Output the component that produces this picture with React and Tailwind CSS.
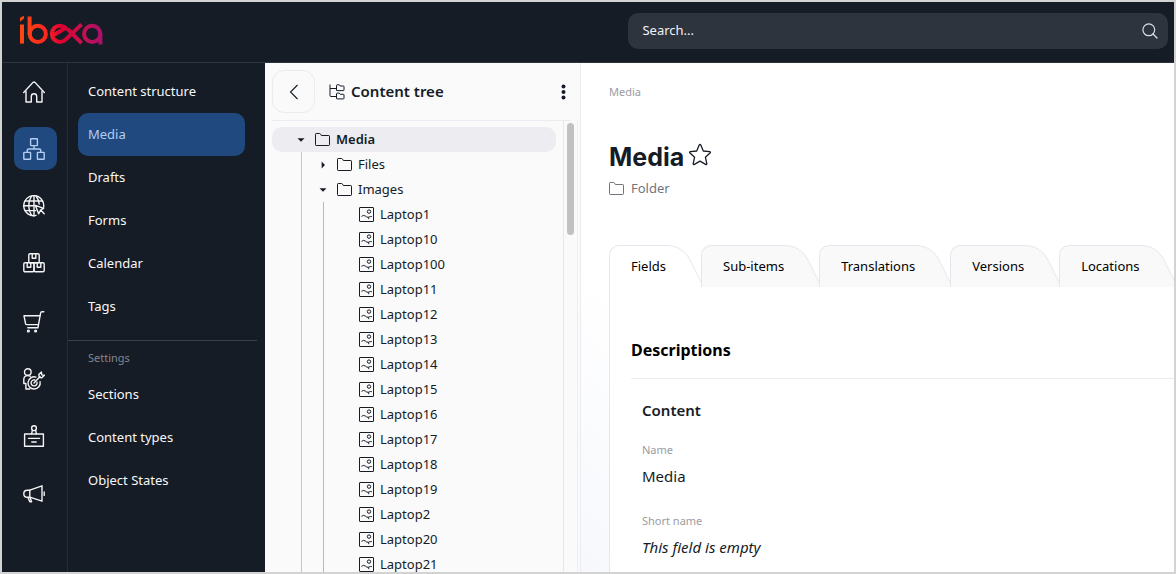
import React, { useState } from 'react';

const iconPaths = {
  home: (
    <>
      <path d="M0.7 11.5 L10 1.4 Q11 0.4 12 1.4 L21.3 11.5" />
      <path d="M3 10.5 V21 H8.3 V15.5 Q8.3 12.8 11 12.8 Q13.7 12.8 13.7 15.5 V21 H19 V10.5" />
    </>
  ),
  content: (
    <>
      <rect x="7.6" y="0.8" width="6.8" height="6.8" rx="0.5" />
      <rect x="0.8" y="14.4" width="6.8" height="6.8" rx="0.5" />
      <rect x="14.4" y="14.4" width="6.8" height="6.8" rx="0.5" />
      <path d="M11 7.6 V11 M4.2 14.4 V12.5 Q4.2 11 5.7 11 H16.3 Q17.8 11 17.8 12.5 V14.4" />
    </>
  ),
  site: (
    <>
      <path d="M20.6 12.2 A10 10 0 1 0 13 20.4" />
      <path d="M8.5 20.2 C4.8 15 4.8 7 8.5 1.2 M13 1 C15 3.6 16 6.4 16.2 9 M11 0.8 V21 M2 6 H19.6 M0.8 10.8 H11.4 M2 15.6 H12.8" />
      <path d="M12.4 10.4 L20.6 13.4 L17.6 15 L21.2 18.8 M17.6 15 L15.6 18.8 L12.4 10.4" />
    </>
  ),
  products: (
    <>
      <rect x="5.8" y="1.8" width="10.4" height="9" rx="1.2" />
      <rect x="0.8" y="10.8" width="10.2" height="9" rx="1.2" />
      <rect x="11" y="10.8" width="10.2" height="9" rx="1.2" />
      <path d="M9.2 1.8 V6.2 H12.8 V1.8 M4.2 10.8 V15.2 H7.8 V10.8 M14.2 10.8 V15.2 H17.8 V10.8" />
    </>
  ),
  cart: (
    <>
      <path d="M20.8 0.8 H19 Q17.8 0.8 17.6 2 L14.9 16.8 H4.8" />
      <path d="M17 4.8 H1 L2.6 12.8 Q2.8 13.6 3.8 13.6 H15.4" />
      <circle cx="5.4" cy="20" r="0.9" />
      <circle cx="12.6" cy="20" r="0.9" />
    </>
  ),
  personalization: (
    <>
      <circle cx="4.8" cy="4" r="3.3" />
      <path d="M6.8 21 H2.9 V15.5 H0.8 V11.5 Q0.8 7.6 4.8 7.6 Q6.2 7.6 7.2 8.3" />
      <path d="M12.9 9.1 A6.1 6.1 0 1 0 17.1 13.8" />
      <path d="M11.8 12 A3 3 0 1 0 14 14.3" />
      <path d="M11 15 L17 8.6 M16.2 9.4 L15.8 6.6 L18.4 4 L18.8 6.9 L21.4 7.3 L18.8 9.8 Z" />
    </>
  ),
  corporate: (
    <>
      <rect x="1.6" y="9" width="18.8" height="12.2" />
      <circle cx="11" cy="3.2" r="2.4" />
      <path d="M8.6 9 L9.4 5.2 M13.4 9 L12.6 5.2 M5.5 13.4 H16.5 M8.8 17 H13.2" />
    </>
  ),
  marketing: (
    <>
      <path d="M6.8 8.2 L19 3.8 V19.2 L6.8 15.2 Z" />
      <path d="M6.8 8.2 H4.2 Q0.8 8.2 0.8 11.7 Q0.8 15.2 4.2 15.2 H6.8 M4.8 15.2 L6.8 19.8 H8.6 L7 15.4 M21.2 10 V13.4" />
    </>
  ),
};

const navGroups = [
  [
    { id: 'home', label: 'Dashboard' },
    { id: 'content', label: 'Content', active: true },
    { id: 'site', label: 'Site' },
    { id: 'products', label: 'Product catalog' },
  ],
  [
    { id: 'cart', label: 'Commerce' },
    { id: 'personalization', label: 'Personalization' },
    { id: 'corporate', label: 'Corporate' },
    { id: 'marketing', label: 'Marketing' },
  ],
];

const menuItems = ['Content structure', 'Media', 'Drafts', 'Forms', 'Calendar', 'Tags'];
const settingsItems = ['Sections', 'Content types', 'Object States'];

const images = [
  'Laptop1', 'Laptop10', 'Laptop100', 'Laptop11', 'Laptop12', 'Laptop13', 'Laptop14', 'Laptop15',
  'Laptop16', 'Laptop17', 'Laptop18', 'Laptop19', 'Laptop2', 'Laptop20', 'Laptop21',
];

const tabs = ['Fields', 'Sub-items', 'Translations', 'Versions', 'Locations'];

const Logo = () => (
  <svg width="84" height="32" viewBox="0 0 84 32" fill="none" strokeWidth="4" aria-label="ibexa" role="img">
    <defs>
      <linearGradient id="brand" gradientUnits="userSpaceOnUse" x1="0" y1="0" x2="84" y2="0">
        <stop offset="0" stopColor="#ff4713" />
        <stop offset="0.3" stopColor="#fa2a1e" />
        <stop offset="0.5" stopColor="#db0032" />
        <stop offset="0.72" stopColor="#c8104a" />
        <stop offset="1" stopColor="#a8106e" />
      </linearGradient>
    </defs>
    <g stroke="url(#brand)">
      <path d="M2 9.5 V28.6" />
      <path d="M0 6.8 V2.8 L4 0.8 V3.4 Z" fill="url(#brand)" stroke="none" />
      <path d="M9.6 1.5 V19.5" />
      <circle cx="17.8" cy="18.9" r="8.1" />
      <path d="M32 21 L45.6 13 A8.1 8.1 0 1 0 45.6 24.6 L61.6 9.4" />
      <path d="M47.6 14 L61.6 28.2" />
      <circle cx="72.2" cy="18.9" r="8.1" />
      <path d="M80.4 18.6 V29.4" />
    </g>
  </svg>
);

const NavIcon = ({ id }) => (
  <svg
    width="22"
    height="22"
    viewBox="0 0 22 22"
    fill="none"
    stroke="currentColor"
    strokeWidth="1.4"
    strokeLinejoin="round"
    strokeLinecap="round"
    aria-hidden="true"
  >
    {iconPaths[id]}
  </svg>
);

const FolderIcon = () => (
  <svg className="shrink-0" width="15" height="15" viewBox="0 0 15 15" fill="none" stroke="currentColor" strokeLinejoin="round" aria-hidden="true">
    <path d="M0.5 12.8 V2.2 Q0.5 1.5 1.2 1.5 H4.6 Q5.2 1.5 5.5 2 L6.3 3.5 H13.8 Q14.5 3.5 14.5 4.2 V12.8 Q14.5 13.5 13.8 13.5 H1.2 Q0.5 13.5 0.5 12.8 Z" />
  </svg>
);

const ImageIcon = () => (
  <svg className="shrink-0" width="15" height="15" viewBox="0 0 15 15" fill="none" stroke="currentColor" aria-hidden="true">
    <rect x="0.5" y="0.5" width="14" height="14" rx="0.4" />
    <circle cx="10" cy="4.6" r="1.7" />
    <path d="M2.5 9.4 Q4.5 7.6 6.3 9 Q7.6 10.6 9.6 10.2 Q11.4 9.2 12.8 9.6 M9.2 10.2 Q9.8 11 9.8 12.2" />
  </svg>
);

const Caret = ({ open = false }) => (
  <button type="button" aria-label={open ? 'Collapse' : 'Expand'} className="flex w-4 shrink-0 justify-center">
    <svg width="8" height="8" viewBox="0 0 8 8" fill="currentColor" aria-hidden="true">
      {open ? <path d="M0.5 2.2 H7.5 L4 5.8 Z" /> : <path d="M2.6 0.6 V7.4 L6 4 Z" />}
    </svg>
  </button>
);

const MenuLink = ({ label, active = false }) => (
  <a
    href="#"
    aria-current={active ? 'page' : undefined}
    className={`flex h-[43px] items-center rounded-[10px] px-2.5 text-[13px] ${
      active ? 'bg-[#20497f] text-[#b3cdf3]' : 'text-[#f8f8fa]'
    }`}
  >
    {label}
  </a>
);

const Field = ({ label, children }) => (
  <div>
    <dt className="text-[11px] leading-4 text-[#9a9ca3]">{label}</dt>
    <dd className="mt-[7px] text-[15px] leading-[22px] text-[#151c26]">{children}</dd>
  </div>
);

const App = () => {
  const [activeTab, setActiveTab] = useState('Fields');

  return (
    <div className="flex h-screen flex-col overflow-hidden border-2 border-[#d3d3d3] bg-white font-['Noto_Sans',sans-serif] text-[#151c26]">
      <header className="flex h-[61px] shrink-0 items-center justify-between border-b border-[#2d343e] bg-[#151c25] pr-[6px] pb-0.5 pl-[18px]">
        <a href="#" className="block">
          <Logo />
        </a>
        <label className="flex h-9 w-[47%] items-center rounded-[10px] bg-[#2e343e] px-3.5">
          <input
            type="search"
            placeholder="Search..."
            aria-label="Search"
            className="min-w-0 flex-1 bg-transparent text-[13px] text-white outline-none placeholder:text-[#f1f1f3]"
          />
          <svg className="-mr-1 shrink-0" width="16" height="16" viewBox="0 0 16 16" fill="none" stroke="#dddee1" strokeWidth="1.2" strokeLinecap="round" aria-hidden="true">
            <circle cx="6.8" cy="6.8" r="5.9" />
            <path d="M11 11 L15 15" />
          </svg>
        </label>
      </header>

      <div className="flex min-h-0 flex-1">
        {/* Main navigation */}
        <nav aria-label="Main" className="flex w-[66px] shrink-0 flex-col gap-4 border-r border-[#262d38] bg-[#151c25] pt-[7px] pl-3">
          {navGroups.map((group, index) => (
            <div key={index} className="flex flex-col gap-3.5">
              {group.map((item) => (
                <a
                  key={item.id}
                  href="#"
                  aria-label={item.label}
                  className={`flex h-[43px] w-[43px] items-center rounded-[10px] pl-[9px] ${
                    item.active ? 'bg-[#20497f] text-[#b3cdf3]' : 'text-[#f4f4f6]'
                  }`}
                >
                  <NavIcon id={item.id} />
                </a>
              ))}
            </div>
          ))}
        </nav>

        {/* Section menu */}
        <nav aria-label="Content" className="w-[197px] shrink-0 bg-[#151c25] pt-[7px]">
          <div className="pr-5 pl-2.5">
            {menuItems.map((label) => (
              <MenuLink key={label} label={label} active={label === 'Media'} />
            ))}
          </div>
          <div className="mt-3 mr-2 border-t border-[#3a404a] pt-2 pr-3 pl-2.5">
            <p className="px-2.5 text-[11px] leading-[18px] text-[#84868e]">Settings</p>
            <div className="mt-1.5">
              {settingsItems.map((label) => (
                <MenuLink key={label} label={label} />
              ))}
            </div>
          </div>
        </nav>

        {/* Content tree */}
        <aside className="flex w-[316px] shrink-0 flex-col border-r border-[#ececf2] bg-[#fafafa] pl-[7px]">
          <div className="mr-[9px] flex h-[58px] shrink-0 items-center border-b border-[#ebebf1]">
            <button type="button" aria-label="Collapse tree" className="flex h-[43px] w-[43px] items-center justify-center rounded-xl border border-[#ebebf1]">
              <svg width="10" height="16" viewBox="0 0 10 16" fill="none" stroke="currentColor" strokeWidth="1.1" aria-hidden="true">
                <path d="M8.5 1 L1.5 8 L8.5 15" />
              </svg>
            </button>
            <svg className="ml-3.5 shrink-0" width="16" height="16" viewBox="0 0 16 16" fill="none" stroke="currentColor" strokeLinejoin="round" aria-hidden="true">
              <path d="M1 0.5 V11.5 Q1 12.5 2 12.5 H7 M1 4.5 H7" />
              <path d="M7.5 6.2 V1.5 Q7.5 0.8 8.2 0.8 H10.3 L11.2 2 H14.4 Q15 2 15 2.6 V6 Q15 6.6 14.4 6.6 H8.1 Q7.5 6.6 7.5 6 Z" />
              <path d="M7.5 14.4 V9.8 Q7.5 9.1 8.2 9.1 H10.3 L11.2 10.3 H14.4 Q15 10.3 15 10.9 V14.3 Q15 14.9 14.4 14.9 H8.1 Q7.5 14.9 7.5 14.3 Z" />
            </svg>
            <h2 className="ml-1.5 flex-1 text-[15px] font-semibold">Content tree</h2>
            <button type="button" aria-label="More options" className="mr-1 flex w-[7px] justify-center">
              <svg width="5" height="16" viewBox="0 0 5 16" fill="currentColor" aria-hidden="true">
                <circle cx="2.5" cy="2.5" r="2" />
                <circle cx="2.5" cy="8" r="2" />
                <circle cx="2.5" cy="13.5" r="2" />
              </svg>
            </button>
          </div>
          <div className="mr-[2px] flex min-h-0 flex-1 border-r border-[#f1eef0]">
            <div className="min-w-0 flex-1 overflow-hidden border-r border-[#e6e6ec] pt-[6px] pr-[7px] text-[13px] leading-[25px]">
              <div className="flex items-center gap-1.5 rounded-[10px] bg-[#ececf1] pl-[21px] font-semibold">
                <Caret open />
                <FolderIcon />
                <span>Media</span>
              </div>
              <ul className="ml-[29px] border-l border-[#c6c6c8] pl-[13px]">
                <li className="flex items-center gap-1.5">
                  <Caret />
                  <FolderIcon />
                  <span>Files</span>
                </li>
                <li>
                  <div className="flex items-center gap-1.5">
                    <Caret open />
                    <FolderIcon />
                    <span>Images</span>
                  </div>
                  <ul className="ml-2 border-l border-[#b9b9bb] pl-[35px]">
                    {images.map((name) => (
                      <li key={name} className="flex items-center gap-1.5">
                        <ImageIcon />
                        <span>{name}</span>
                      </li>
                    ))}
                  </ul>
                </li>
              </ul>
            </div>
            <div className="w-[13px] px-[3px] pt-[2px]">
              <div className="h-28 rounded-full bg-[#c1c1c1]" />
            </div>
          </div>
        </aside>

        {/* Content view */}
        <main className="flex min-w-0 flex-1 flex-col overflow-hidden bg-linear-to-tr from-[#f6f8fc] to-white to-30% pl-7">
          <nav aria-label="Breadcrumb" className="pt-5 text-[11px] leading-[18px] text-[#9a9ca3]">
            Media
          </nav>
          <div className="mt-9 flex items-center gap-1">
            <h1 className="pt-1 font-['Inter',sans-serif] text-[25px] leading-8 font-bold">Media</h1>
            <button type="button" aria-label="Add to bookmarks">
              <svg width="24" height="24" viewBox="0 0 24 24" fill="none" stroke="currentColor" strokeWidth="1.3" strokeLinejoin="round" aria-hidden="true">
                <path d="M11.2 2 Q12 0.6 12.8 2 L15.3 8 L21.6 8.6 Q23 8.9 22 10 L17.4 14.2 L18.8 20.6 Q18.9 22 17.6 21.4 L12 18.1 L6.4 21.4 Q5.1 22 5.2 20.6 L6.6 14.2 L2 10 Q1 8.9 2.4 8.6 L8.7 8 Z" />
              </svg>
            </button>
          </div>
          <div className="mt-[5px] flex items-center gap-[7px] text-[13px] leading-5 text-[#71747c]">
            <FolderIcon />
            Folder
          </div>

          <div role="tablist" className="mt-[47px] flex shrink-0">
            {tabs.map((tab) => {
              const active = tab === activeTab;
              return (
                <button
                  key={tab}
                  type="button"
                  role="tab"
                  aria-selected={active}
                  onClick={() => setActiveTab(tab)}
                  className="-mr-[3px] flex h-[42px] shrink-0 text-[13px] text-black"
                >
                  <span
                    className={`flex h-full items-center rounded-tl-[10px] border-t border-l border-[#e6e6ef] pl-[21px] ${
                      active ? 'bg-white' : 'bg-[#f9f9f9]'
                    }`}
                  >
                    {tab}
                  </span>
                  <svg width="38" height="42" viewBox="0 0 38 42" fill="none" aria-hidden="true">
                    <path d="M0 0.5 C12 0.5 19 6 24 15 L37.5 42 H0 Z" fill={active ? '#ffffff' : '#f9f9f9'} />
                    <path d="M0 0.5 C12 0.5 19 6 24 15 L37.5 42" stroke="#e6e6ef" />
                  </svg>
                </button>
              );
            })}
          </div>
          <section role="tabpanel" className="flex-1 border-l border-[#e6e6ef] bg-white pl-[21px]">
            <h2 className="border-b border-[#ebebf0] pt-[51px] pb-4 text-base leading-6 font-bold text-black">Descriptions</h2>
            <div className="pl-[11px]">
              <h3 className="pt-5 text-[15px] leading-[22px] font-semibold">Content</h3>
              <dl className="mt-[21px] flex flex-col gap-[26px]">
                <Field label="Name">Media</Field>
                <Field label="Short name">
                  <em>This field is empty</em>
                </Field>
              </dl>
            </div>
          </section>
        </main>
      </div>
    </div>
  );
};

export default App;
